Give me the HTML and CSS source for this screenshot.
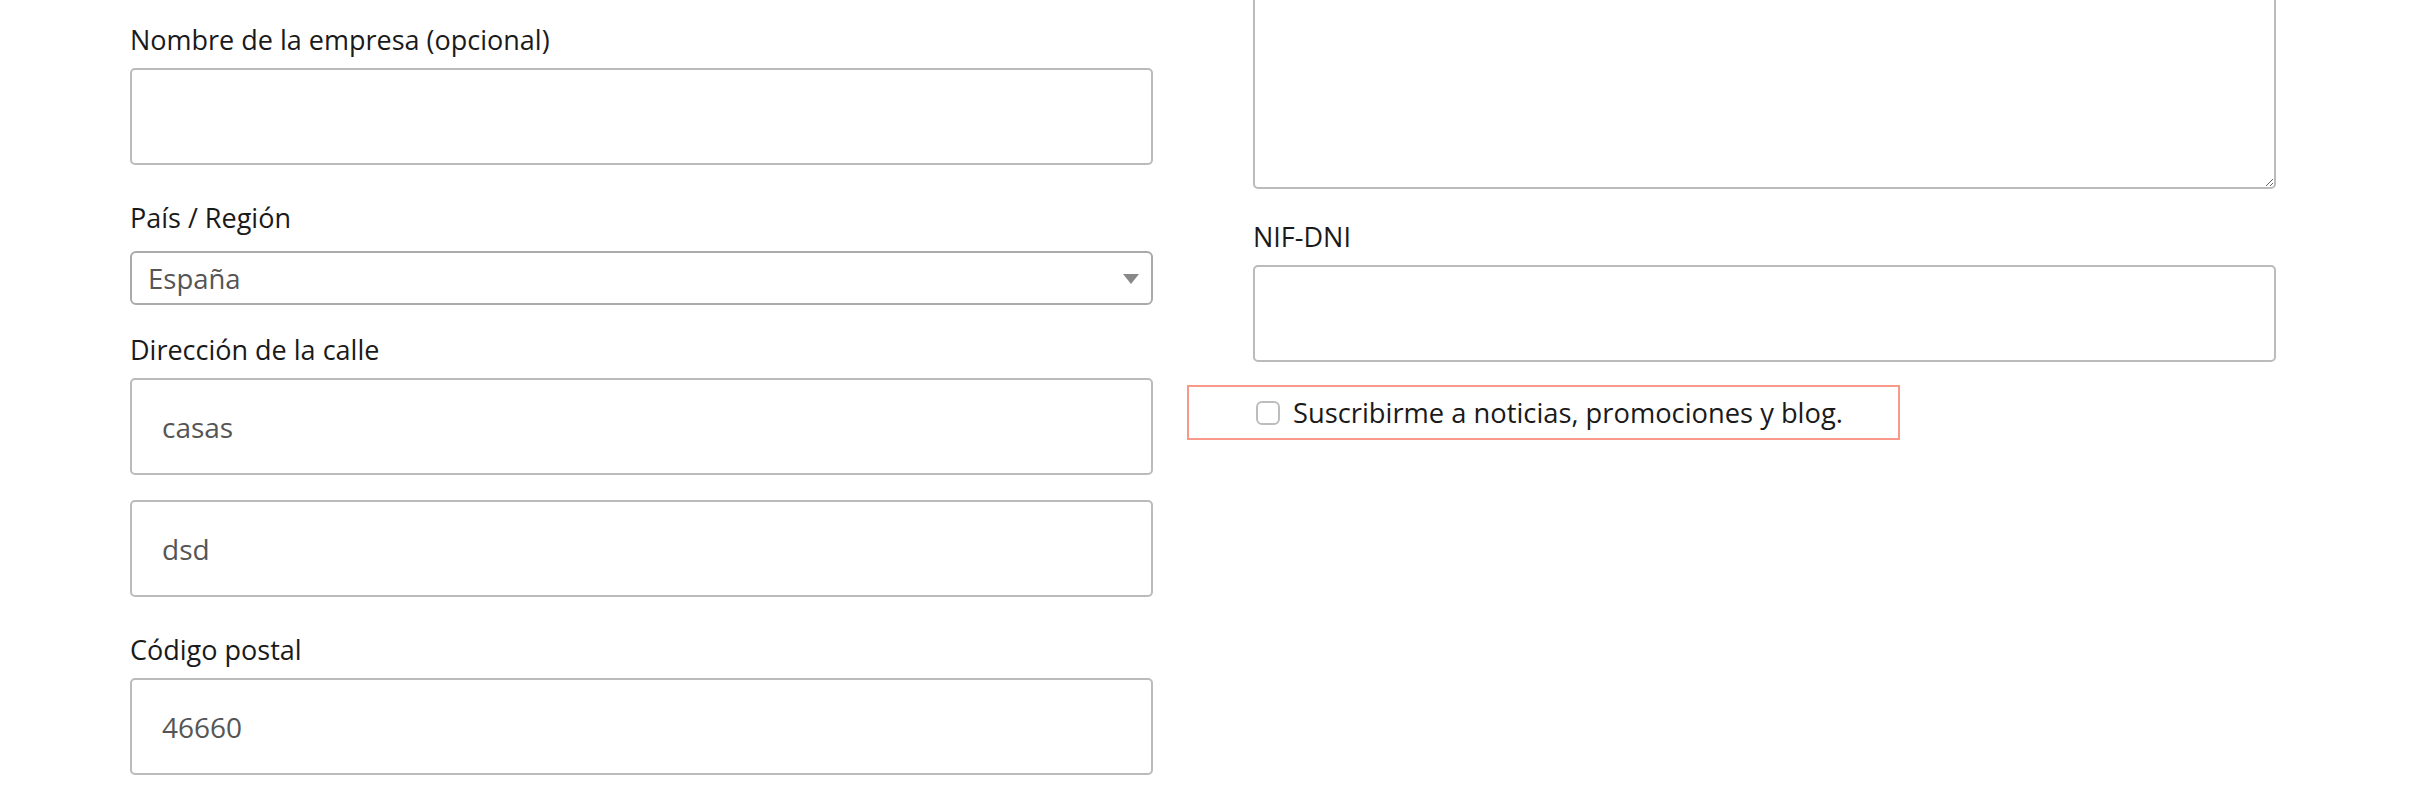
FILE: index.html
```html
<!DOCTYPE html>
<html lang="es">
<head>
    <meta charset="UTF-8">
    <meta name="viewport" content="width=device-width, initial-scale=1.0">
    <title>Finalizar compra</title>
    <link rel="stylesheet" href="styles.css">
</head>
<body>
    <form class="checkout">
        <div class="col">
            <div class="field">
                <label for="billing_company">Nombre de la empresa (opcional)</label>
                <input type="text" id="billing_company" name="billing_company">
            </div>

            <div class="field field-select">
                <label for="billing_country">País / Región</label>
                <div class="select-box">
                    <span id="billing_country">España</span>
                </div>
            </div>

            <div class="field">
                <label for="billing_address_1">Dirección de la calle</label>
                <input type="text" id="billing_address_1" name="billing_address_1" value="casas">
                <input type="text" id="billing_address_2" name="billing_address_2" value="dsd" class="second">
            </div>

            <div class="field">
                <label for="billing_postcode">Código postal</label>
                <input type="text" id="billing_postcode" name="billing_postcode" value="46660">
            </div>
        </div>

        <div class="col">
            <textarea class="notes" name="order_comments"></textarea>

            <div class="field field-last">
                <label for="billing_nif">NIF-DNI</label>
                <input type="text" id="billing_nif" name="billing_nif">
            </div>

            <div class="newsletter">
                <input type="checkbox" id="newsletter" name="newsletter">
                <label for="newsletter">Suscribirme a noticias, promociones y blog.</label>
            </div>
        </div>
    </form>
</body>
</html>
```

FILE: styles.css
```css
body {
    margin: 0;
    background: #fff;
    font-family: "Open Sans", Arial, sans-serif;
    color: #1a1a1a;
}
.checkout {
    display: flex;
    gap: 100px;
    padding: 22px 0 0 130px;
}
.col {
    width: 1023px;
    display: flex;
    flex-direction: column;
}
.field {
    display: flex;
    flex-direction: column;
    margin-bottom: 35px;
}
.field label {
    font-size: 27px;
    line-height: 36px;
    margin-bottom: 10px;
}
.field input {
    box-sizing: border-box;
    height: 97px;
    width: 100%;
    padding: 0 30px;
    border: 2px solid #bbb;
    border-radius: 5px;
    font-family: inherit;
    font-size: 28px;
    color: #555;
    background: #fff;
}
.field input.second {
    margin-top: 25px;
}
.field-select {
    margin-bottom: 27px;
}
.field-select label {
    margin-bottom: 15px;
}
.select-box {
    position: relative;
    box-sizing: border-box;
    height: 54px;
    border: 2px solid #aaa;
    border-radius: 6px;
    padding: 0 16px;
    display: flex;
    align-items: center;
    font-size: 27.5px;
    color: #555;
}
.select-box::after {
    content: "";
    position: absolute;
    right: 12px;
    top: 21px;
    border-left: 8px solid transparent;
    border-right: 8px solid transparent;
    border-top: 10px solid #888;
}
.notes {
    box-sizing: border-box;
    height: 240px;
    margin: -73px 0 30px;
    width: 100%;
    border: 2px solid #bbb;
    border-radius: 5px;
    font-family: inherit;
}
.field-last {
    margin-bottom: 23px;
}
.newsletter {
    box-sizing: border-box;
    width: 713px;
    height: 55px;
    margin-left: -66px;
    padding-left: 67px;
    border: 2px solid #f9998a;
    display: flex;
    align-items: center;
    gap: 13px;
}
.newsletter input {
    appearance: none;
    margin: 0;
    width: 24px;
    height: 24px;
    border: 2px solid #bdbdbd;
    border-radius: 6px;
    background: #fff;
}
.newsletter label {
    font-size: 27.3px;
    line-height: 36px;
}
```
